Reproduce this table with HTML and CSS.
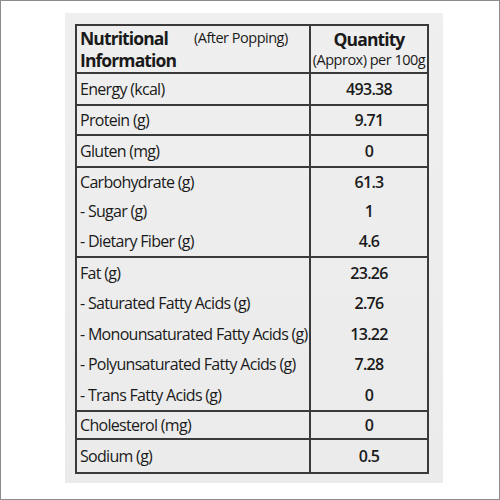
FILE: index.html
```html
<!DOCTYPE html>
<html lang="en">
<head>
    <meta charset="UTF-8">
    <meta name="viewport" content="width=device-width, initial-scale=1.0">
    <title>Nutritional Information</title>
    <link rel="stylesheet" href="styles.css">
</head>
<body>
    <div class="frame">
        <div class="panel">
            <table class="nutrition">
                <tr class="head">
                    <td class="label">
                        <div class="head-left">
                            <div class="title">
                                <div>Nutritional</div>
                                <div>Information</div>
                            </div>
                            <span class="note">(After Popping)</span>
                        </div>
                    </td>
                    <td class="value">
                        <div class="title">Quantity</div>
                        <div class="note">(Approx) per 100g</div>
                    </td>
                </tr>
                <tr class="r-energy">
                    <td class="label">Energy (kcal)</td>
                    <td class="value">493.38</td>
                </tr>
                <tr class="r-protein">
                    <td class="label">Protein (g)</td>
                    <td class="value">9.71</td>
                </tr>
                <tr class="r-gluten">
                    <td class="label">Gluten (mg)</td>
                    <td class="value">0</td>
                </tr>
                <tr class="group carb">
                    <td class="label">
                        <div>Carbohydrate (g)</div>
                        <div>- Sugar (g)</div>
                        <div>- Dietary Fiber (g)</div>
                    </td>
                    <td class="value">
                        <div>61.3</div>
                        <div>1</div>
                        <div>4.6</div>
                    </td>
                </tr>
                <tr class="group fat">
                    <td class="label">
                        <div>Fat (g)</div>
                        <div>- Saturated Fatty Acids (g)</div>
                        <div>- Monounsaturated Fatty Acids (g)</div>
                        <div>- Polyunsaturated Fatty Acids (g)</div>
                        <div>- Trans Fatty Acids (g)</div>
                    </td>
                    <td class="value">
                        <div>23.26</div>
                        <div>2.76</div>
                        <div>13.22</div>
                        <div>7.28</div>
                        <div>0</div>
                    </td>
                </tr>
                <tr class="r-chol">
                    <td class="label">Cholesterol (mg)</td>
                    <td class="value">0</td>
                </tr>
                <tr class="r-sodium">
                    <td class="label">Sodium (g)</td>
                    <td class="value">0.5</td>
                </tr>
            </table>
        </div>
    </div>
</body>
</html>
```

FILE: styles.css
```css
* {
    box-sizing: border-box;
    margin: 0;
    padding: 0;
}
body {
    font-family: 'Open Sans', sans-serif;
    background-color: #FFFFFF;
    color: #1A1A1A;
}
.frame {
    width: 500px;
    height: 500px;
    border: 1px solid #8C8C8C;
    padding: 12px 0 0 64px;
    background-color: #FFFFFF;
}
.panel {
    width: 378px;
    height: 470px;
    background: linear-gradient(#EFEFEF, #EBEBEB);
    padding: 11px 0 0 10px;
}
.nutrition {
    border-collapse: collapse;
    width: 354px;
    font-size: 16px;
    font-weight: 500;
    letter-spacing: -0.7px;
}
.nutrition td {
    border: 2px solid #3A3A3A;
    vertical-align: middle;
    line-height: 24px;
    padding: 0;
}
.nutrition td.label {
    width: 234px;
    padding-left: 3px;
}
.nutrition td.value {
    text-align: center;
    font-weight: 600;
}
.head td {
    height: 48px;
}
.head-left {
    display: flex;
    align-items: flex-start;
    gap: 18px;
}
.head .title {
    font-size: 17.5px;
    font-weight: 700;
    line-height: 22px;
    letter-spacing: -0.9px;
}
.head .note {
    font-size: 14.5px;
    font-weight: 400;
    line-height: 20px;
    letter-spacing: -0.5px;
}
.head-left .note {
    padding-top: 1px;
}
.r-energy td { height: 32px; }
.r-protein td { height: 30px; }
.r-gluten td { height: 32px; }
.r-chol td { height: 28px; }
.r-sodium td { height: 34px; }
.group td {
    vertical-align: top;
}
.carb td {
    line-height: 29.3px;
}
.fat td {
    line-height: 30.4px;
}
```
